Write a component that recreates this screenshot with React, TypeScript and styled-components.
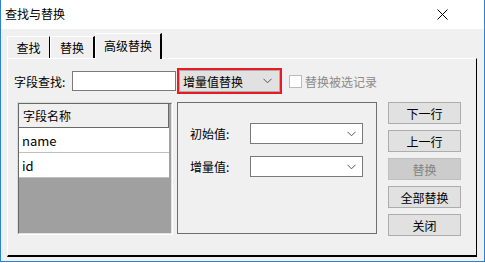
import * as React from "react";
import styled, { createGlobalStyle } from "styled-components";

const font = `"Noto Sans CJK SC", "Microsoft YaHei", sans-serif`;

const GlobalStyle = createGlobalStyle`
  html, body {
    margin: 0;
    padding: 0;
    background: #fff;
  }
  body {
    font-family: ${font};
    font-size: 12px;
    color: #000;
  }
`;

const Chevron: React.FC<{ color?: string }> = ({ color = "#555" }) => (
  <svg width="9" height="6" viewBox="0 0 9 6">
    <polyline points="0.5,0.8 4.5,4.8 8.5,0.8" fill="none" stroke={color} strokeWidth="1" />
  </svg>
);

const fields = ["name", "id"];
const buttons = [
  { label: "下一行" },
  { label: "上一行" },
  { label: "替换", disabled: true },
  { label: "全部替换" },
  { label: "关闭" },
];

const App: React.FC = () => {
  return (
    <>
      <GlobalStyle />
      <Window>
        <TitleBar>
          <Title>查找与替换</Title>
          <Close>
            <svg width="11" height="11" viewBox="0 0 11 11">
              <path d="M0.5 0.5 L10.5 10.5 M10.5 0.5 L0.5 10.5" stroke="#000" strokeWidth="1" />
            </svg>
          </Close>
        </TitleBar>
        <Body>
          <Tabs>
            <Tab width={43}>查找</Tab>
            <Tab width={45}>替换</Tab>
            <Tab width={67} active>
              高级替换
            </Tab>
          </Tabs>
          <Panel>
            <SearchRow>
              <Label width={58}>字段查找:</Label>
              <TextInput />
              <ModeSelect>
                <ModeInner>
                  <span>增量值替换</span>
                  <Chevron />
                </ModeInner>
              </ModeSelect>
              <Check />
              <CheckLabel>替换被选记录</CheckLabel>
            </SearchRow>
            <MainRow>
              <List>
                <ListInner>
                  <HeaderCell>字段名称</HeaderCell>
                  {fields.map((f) => (
                    <Cell key={f}>{f}</Cell>
                  ))}
                </ListInner>
              </List>
              <Group>
                <FieldRow>
                  <Label width={60}>初始值:</Label>
                  <Combo>
                    <Chevron />
                  </Combo>
                </FieldRow>
                <FieldRow>
                  <Label width={60}>增量值:</Label>
                  <Combo>
                    <Chevron />
                  </Combo>
                </FieldRow>
              </Group>
              <Buttons>
                {buttons.map((b) => (
                  <Button key={b.label} disabled={b.disabled}>
                    {b.label}
                  </Button>
                ))}
              </Buttons>
            </MainRow>
          </Panel>
        </Body>
      </Window>
    </>
  );
};

const Window = styled.div`
  width: 485px;
  height: 262px;
  box-sizing: border-box;
  border: 1px solid #2b80d8;
  border-top: none;
  display: flex;
  flex-direction: column;
  background: #f0f0f0;
`;

const TitleBar = styled.div`
  height: 29px;
  flex: none;
  background: #fff;
  display: flex;
  align-items: center;
  justify-content: space-between;
  padding: 0 0 0 4px;
`;

const Title = styled.span`
  font-size: 12px;
  line-height: 1;
  margin-top: -1px;
`;

const Close = styled.div`
  width: 46px;
  height: 29px;
  display: flex;
  align-items: center;
  justify-content: center;
  margin-right: 19px;
`;

const Body = styled.div`
  flex: 1;
  padding: 4px 6px 0 6px;
  display: flex;
  flex-direction: column;
`;

const Tabs = styled.div`
  display: flex;
  align-items: flex-end;
  height: 25px;
  position: relative;
  z-index: 1;
`;

const Tab = styled.div<{ width: number; active?: boolean }>`
  width: ${(p) => p.width}px;
  height: ${(p) => (p.active ? 26 : 22)}px;
  box-sizing: border-box;
  margin-bottom: ${(p) => (p.active ? -1 : 0)}px;
  border-top: 1px solid #fff;
  border-left: 1px solid #fff;
  border-right: 2px solid #000;
  background: #f0f0f0;
  display: flex;
  align-items: center;
  justify-content: center;
  padding-bottom: ${(p) => (p.active ? 3 : 0)}px;
  font-size: 12px;
  &:first-child {
    border-right-width: 1px;
  }
`;

const Panel = styled.div`
  width: 470px;
  height: 199px;
  box-sizing: border-box;
  border-top: 1px solid #fff;
  border-left: 1px solid #fff;
  border-right: 1px solid #000;
  border-bottom: 2px solid #000;
  padding-top: 9px;
  display: flex;
  flex-direction: column;
`;

const SearchRow = styled.div`
  display: flex;
  align-items: center;
  height: 26px;
  padding-left: 6px;
`;

const Label = styled.span<{ width: number }>`
  width: ${(p) => p.width}px;
  flex: none;
  font-size: 12px;
  white-space: nowrap;
`;

const TextInput = styled.div`
  width: 104px;
  height: 20px;
  box-sizing: border-box;
  border: 1px solid #7a7a7a;
  background: #fff;
`;

const ModeSelect = styled.div`
  margin-left: 1px;
  width: 105px;
  height: 26px;
  box-sizing: border-box;
  border: 2px solid #e81b23;
  background: #e1e1e1;
`;

const ModeInner = styled.div`
  height: 100%;
  box-sizing: border-box;
  border: 1px solid #adadad;
  display: flex;
  align-items: center;
  justify-content: space-between;
  padding: 0 7px 0 3px;
  font-size: 12px;
`;

const Check = styled.div`
  margin-left: 7px;
  width: 13px;
  height: 13px;
  box-sizing: border-box;
  border: 1px solid #bcbcbc;
  background: #fff;
`;

const CheckLabel = styled.span`
  margin-left: 3px;
  color: #8a8a8a;
  font-size: 12px;
`;

const MainRow = styled.div`
  display: flex;
  align-items: flex-start;
  margin-top: 8px;
  padding-left: 9px;
`;

const List = styled.div`
  width: 156px;
  height: 133px;
  box-sizing: border-box;
  border-top: 1px solid #dcdcdc;
  border-left: 1px solid #dcdcdc;
  border-right: 1px solid #fff;
  border-bottom: 1px solid #fff;
`;

const ListInner = styled.div`
  height: 100%;
  box-sizing: border-box;
  border-top: 1px solid #696969;
  border-left: 1px solid #696969;
  border-right: 1px solid #e3e3e3;
  border-bottom: 1px solid #e3e3e3;
  background: #a0a0a0;
  display: flex;
  flex-direction: column;
`;

const HeaderCell = styled.div`
  width: 150px;
  height: 24px;
  box-sizing: border-box;
  background: #f0f0f0;
  border-bottom: 1px solid #696969;
  border-right: 1px solid #696969;
  display: flex;
  align-items: center;
  padding-left: 4px;
  font-size: 12px;
`;

const Cell = styled.div`
  width: 150px;
  height: 25px;
  box-sizing: border-box;
  background: #fff;
  border-bottom: 1px solid #c0c0c0;
  display: flex;
  align-items: center;
  padding-left: 3px;
  font-size: 13px;
  color: #000;
`;

const Group = styled.div`
  margin-left: 4px;
  width: 200px;
  height: 132px;
  box-sizing: border-box;
  border: 1px solid #6e6e6e;
  padding: 20px 0 0 12px;
  display: flex;
  flex-direction: column;
  gap: 12px;
`;

const FieldRow = styled.div`
  display: flex;
  align-items: center;
  height: 21px;
`;

const Combo = styled.div`
  width: 113px;
  height: 21px;
  box-sizing: border-box;
  border: 1px solid #7a7a7a;
  background: #fff;
  display: flex;
  align-items: center;
  justify-content: flex-end;
  padding-right: 6px;
`;

const Buttons = styled.div`
  margin-left: 11px;
  display: flex;
  flex-direction: column;
  gap: 6px;
`;

const Button = styled.div<{ disabled?: boolean }>`
  width: 73px;
  height: 22px;
  box-sizing: border-box;
  border: 1px solid ${(p) => (p.disabled ? "#bfbfbf" : "#adadad")};
  background: ${(p) => (p.disabled ? "#cccccc" : "#e1e1e1")};
  color: ${(p) => (p.disabled ? "#838383" : "#000")};
  display: flex;
  align-items: center;
  justify-content: center;
  font-size: 12px;
`;

export default App;
